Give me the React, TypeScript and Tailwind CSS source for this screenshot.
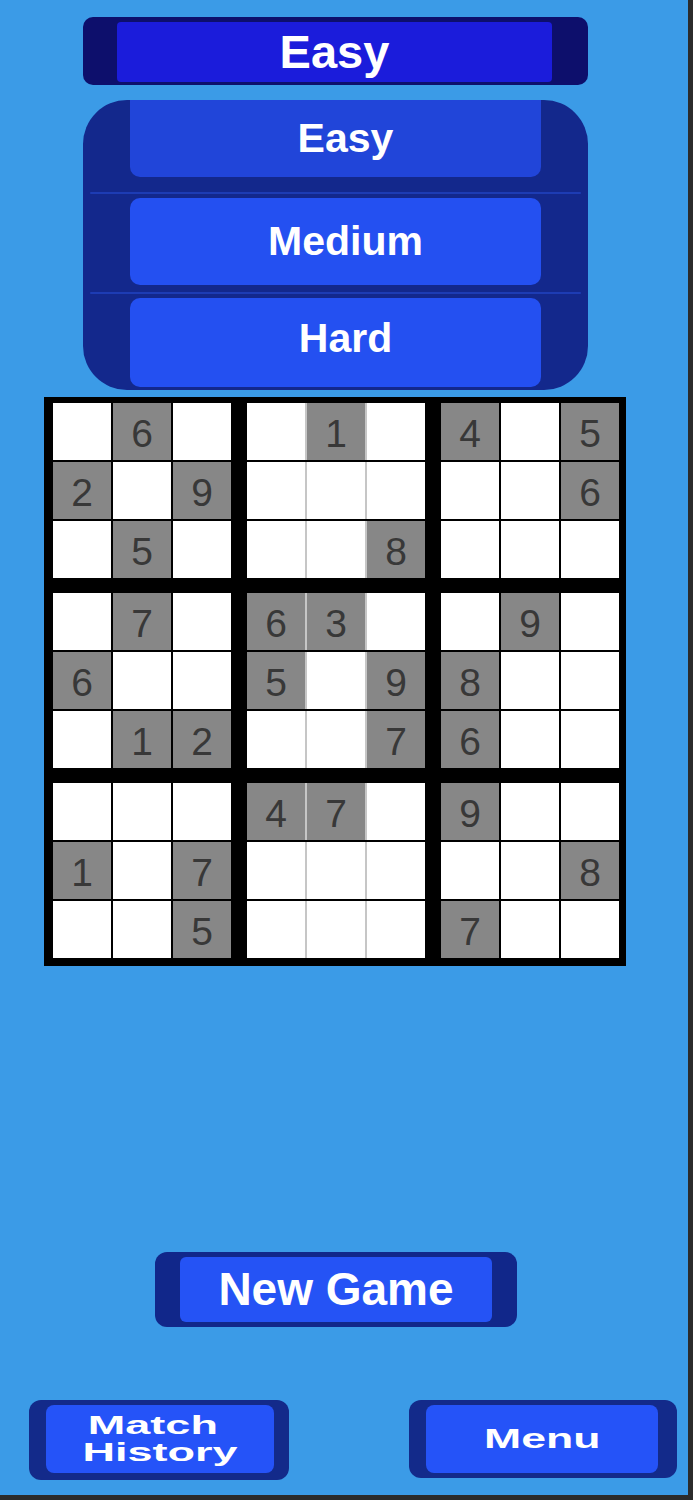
import React from "react";

// 0 = empty cell, anything else is a given clue (shaded)
const PUZZLE: number[][] = [
  [0, 6, 0, 0, 1, 0, 4, 0, 5],
  [2, 0, 9, 0, 0, 0, 0, 0, 6],
  [0, 5, 0, 0, 0, 8, 0, 0, 0],
  [0, 7, 0, 6, 3, 0, 0, 9, 0],
  [6, 0, 0, 5, 0, 9, 8, 0, 0],
  [0, 1, 2, 0, 0, 7, 6, 0, 0],
  [0, 0, 0, 4, 7, 0, 9, 0, 0],
  [1, 0, 7, 0, 0, 0, 0, 0, 8],
  [0, 0, 5, 0, 0, 0, 7, 0, 0],
];

const font = { fontFamily: '"Liberation Sans", Arial, sans-serif' };

const Cell: React.FC<{ value: number }> = ({ value }) => (
  <div
    className={`flex h-[57px] items-center justify-center pt-[4px] text-[39px] leading-none text-[#383838] ${
      value ? "bg-[#878787]" : "bg-white"
    }`}
  >
    {value ? value : ""}
  </div>
);

const Box: React.FC<{ band: number; stack: number }> = ({ band, stack }) => {
  const middle = stack === 1;
  return (
    <div className="flex w-[178px] flex-col gap-[2px] bg-black">
      {[0, 1, 2].map((r) => (
        <div
          key={r}
          className={`grid grid-cols-3 gap-[2px] ${middle ? "bg-[#c6c6c6]" : "bg-black"}`}
        >
          {[0, 1, 2].map((c) => (
            <Cell key={c} value={PUZZLE[band * 3 + r][stack * 3 + c]} />
          ))}
        </div>
      ))}
    </div>
  );
};

const Board: React.FC = () => (
  <div className="ml-[44px] mt-[7px] flex w-[582px] flex-col gap-[15px] bg-black pb-[8px] pl-[9px] pr-[7px] pt-[6px]">
    {[0, 1, 2].map((band) => (
      <div key={band} className="flex gap-[16px]">
        {[0, 1, 2].map((stack) => (
          <Box key={stack} band={band} stack={stack} />
        ))}
      </div>
    ))}
  </div>
);

// dark band between two list items, with the faint rim light of the slab below
const Divider: React.FC<{ h: string }> = ({ h }) => (
  <div className={`-mx-[40px] flex flex-col justify-end ${h}`}>
    <div className="mb-[4px] h-[2px] rounded-full bg-[#1d3cb4]" />
  </div>
);

const App: React.FC = () => {
  return (
    <div
      className="flex h-[1500px] w-[693px] flex-col border-b-[5px] border-r-[5px] border-[#2b2b2b] bg-[#3b9be7] text-white"
      style={font}
    >
      {/* selected difficulty */}
      <div className="ml-[83px] mt-[17px] h-[68px] w-[505px] rounded-[10px] bg-[#0d0f6c] pb-[3px] pl-[34px] pr-[36px] pt-[5px]">
        <div className="flex h-full items-center justify-center rounded-[4px] bg-[#1b1cdb] text-[47px] font-bold">
          Easy
        </div>
      </div>

      {/* difficulty list */}
      <div className="ml-[83px] mt-[15px] flex h-[290px] w-[505px] flex-col rounded-[44px] bg-[#13288c] px-[47px] pb-[3px]">
        <div className="flex h-[77px] items-center justify-center rounded-b-[10px] bg-[#2145d9] pl-[20px] text-[41px] font-bold">
          Easy
        </div>
        <Divider h="h-[21px]" />
        <div className="flex h-[87px] items-center justify-center rounded-[10px] bg-[#2450f1] pl-[20px] text-[41px] font-bold">
          Medium
        </div>
        <Divider h="h-[13px]" />
        <div className="flex h-[89px] items-center justify-center rounded-[10px] bg-[#2450f1] pb-[8px] pl-[20px] text-[41px] font-bold">
          Hard
        </div>
      </div>

      <Board />

      {/* new game */}
      <div className="ml-[155px] mt-[286px] h-[75px] w-[362px] rounded-[12px] bg-[#11278a] px-[25px] py-[5px]">
        <div className="flex h-full items-center justify-center rounded-[6px] bg-[#2553f5] text-[46px] font-bold">
          New Game
        </div>
      </div>

      {/* footer buttons */}
      <div className="ml-[29px] mt-[73px] flex items-start gap-[120px]">
        <div className="h-[80px] w-[260px] rounded-[12px] bg-[#132a8a] pb-[7px] pl-[17px] pr-[15px] pt-[5px]">
          <div className="flex h-full items-center justify-center rounded-[8px] bg-[#2553f8]">
            <div className="scale-x-[1.8] text-center text-[25px] font-bold leading-[27px]">
              <span className="block pr-[8px]">Match</span>
              <span className="block">History</span>
            </div>
          </div>
        </div>
        <div className="h-[78px] w-[268px] rounded-[12px] bg-[#132a8a] pb-[5px] pl-[17px] pr-[19px] pt-[5px]">
          <div className="flex h-full items-center justify-center rounded-[8px] bg-[#2553f8]">
            <div className="scale-x-[1.65] text-[27px] font-bold leading-none">Menu</div>
          </div>
        </div>
      </div>
    </div>
  );
};

export default App;
